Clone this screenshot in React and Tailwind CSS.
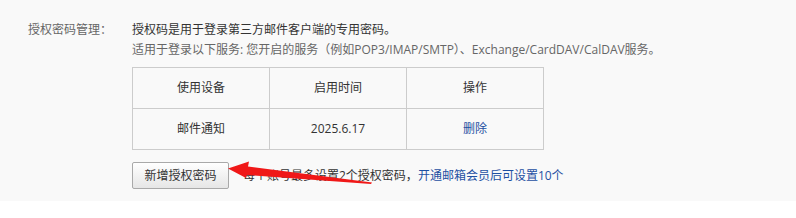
export default function App() {
  const font = { fontFamily: '"Open Sans", "Noto Sans CJK SC", sans-serif' };
  return (
    <div className="w-[796px] h-[218px] bg-white" style={font}>
      <div className="relative bg-[#f9f9f9] pt-[20px] pb-[12px] flex text-[12px] leading-[20px]">
        {/* label */}
        <div className="w-[132px] pl-[28px] text-[#666] shrink-0 whitespace-nowrap">授权密码管理：</div>

        <div className="flex flex-col">
          <p className="text-[#333]">授权码是用于登录第三方邮件客户端的专用密码。</p>
          <p className="text-[#666] whitespace-nowrap">
            适用于登录以下服务: 您开启的服务（例如POP3/IMAP/SMTP）、Exchange/CardDAV/CalDAV服务。
          </p>

          <table className="mt-[7px] w-[412px] border-collapse text-center text-[#333]">
            <tbody>
              <tr>
                <td className="h-[41px] w-[137px] border border-[#cccccc]">使用设备</td>
                <td className="h-[41px] w-[137px] border border-[#cccccc]">启用时间</td>
                <td className="h-[41px] border border-[#cccccc]">操作</td>
              </tr>
              <tr>
                <td className="h-[41px] border border-[#cccccc]">邮件通知</td>
                <td className="h-[41px] border border-[#cccccc]">2025.6.17</td>
                <td className="h-[41px] border border-[#cccccc]">
                  <a href="#" className="text-[#1e50a2]">删除</a>
                </td>
              </tr>
            </tbody>
          </table>

          <div className="mt-[12px] flex items-center">
            <button className="h-[27px] w-[97px] rounded-[2px] border border-[#a9a9a9] bg-gradient-to-b from-white to-[#e6e6e6] text-[#333] text-[12px]">
              新增授权密码
            </button>
            <span className="ml-[14px] text-[#333] whitespace-nowrap">
              每个账号最多设置2个授权密码，
              <a href="#" className="text-[#1e50a2]">开通邮箱会员后可设置10个</a>
            </span>
          </div>
        </div>

        {/* red annotation arrow */}
        <svg
          className="absolute left-0 top-0 pointer-events-none"
          width="796"
          height="218"
          viewBox="0 0 796 218"
        >
          <polygon
            points="228,168.5 249,161.5 248,166.5 372,182.5 371,184 247,175 246,178"
            fill="#f01818"
          />
        </svg>
      </div>
    </div>
  );
}
